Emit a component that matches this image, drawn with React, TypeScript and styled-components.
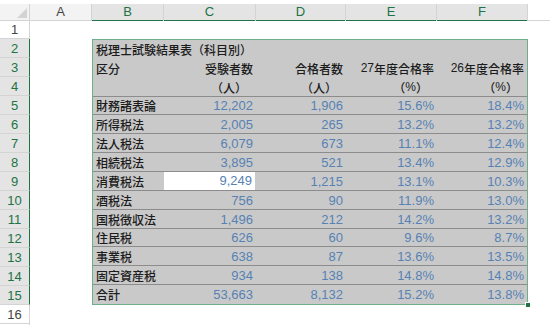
import React from 'react';
import styled, { createGlobalStyle } from 'styled-components';

const GlobalStyle = createGlobalStyle`
  html, body {
    margin: 0;
    padding: 0;
    background: #ffffff;
  }
  body {
    font-family: "Liberation Sans", "Noto Sans CJK JP", sans-serif;
  }
`;

const GREEN = '#217346';
const COLS = '30px 62px 72px 92px 90px 91px 91px 1fr';

const Sheet = styled.div`
  width: 550px;
  height: 325px;
  overflow: hidden;
  display: flex;
  flex-direction: column;
  padding-top: 4px;
  box-sizing: border-box;
`;

const ColumnHeaderBar = styled.div`
  display: grid;
  grid-template-columns: ${COLS};
  height: 16px;
  border-bottom: 1px solid #d4d4d4;
`;

const Corner = styled.div`
  background: #f3f3f3;
  border-right: 1px solid #d4d4d4;
  display: flex;
  align-items: flex-end;
  justify-content: flex-end;
  padding: 0 2px 2px 0;
`;

const ColumnHeader = styled.div<{ $selected?: boolean; $blank?: boolean }>`
  background: ${(p) => (p.$blank ? '#ffffff' : p.$selected ? '#e4e4e4' : '#f3f3f3')};
  color: ${(p) => (p.$selected ? GREEN : '#444444')};
  border-right: ${(p) => (p.$blank ? 'none' : '1px solid #d4d4d4')};
  box-shadow: ${(p) => (p.$selected ? `inset 0 -1px 0 ${GREEN}` : 'none')};
  margin-bottom: ${(p) => (p.$selected ? '-1px' : '0')};
  font-size: 13px;
  line-height: 16px;
  text-align: center;
`;

const SheetRow = styled.div<{ $height: number }>`
  display: flex;
  height: ${(p) => p.$height}px;
  flex-shrink: 0;
`;

const RowHeader = styled.div<{ $selected?: boolean }>`
  width: 30px;
  flex-shrink: 0;
  box-sizing: border-box;
  background: ${(p) => (p.$selected ? '#e4e4e4' : '#ffffff')};
  color: ${(p) => (p.$selected ? GREEN : '#444444')};
  border-right: 1px solid ${(p) => (p.$selected ? GREEN : '#d4d4d4')};
  border-bottom: 1px solid #d4d4d4;
  font-size: 13px;
  display: flex;
  align-items: center;
  justify-content: center;
`;

const Middle = styled.div`
  display: flex;
  height: 266px;
  flex-shrink: 0;
`;

const RowHeaderColumn = styled.div`
  width: 30px;
  display: grid;
  grid-template-rows: repeat(14, 1fr);
`;

const BlankColumn = styled.div`
  width: 62px;
`;

const TableBox = styled.div`
  position: relative;
  width: 436px;
  box-sizing: border-box;
  border: 1px solid #6fae8a;
  background: #c9c9c9;
  display: grid;
  grid-template-rows: repeat(14, 1fr);
`;

const FillHandle = styled.div`
  position: absolute;
  right: -3px;
  bottom: -3px;
  width: 4px;
  height: 4px;
  background: ${GREEN};
  border: 1px solid #ffffff;
  border-width: 1px 0 0 1px;
`;

const TableRow = styled.div<{ $ruled?: boolean }>`
  display: grid;
  grid-template-columns: 71px 92px 90px 91px 90px;
  border-top: ${(p) => (p.$ruled ? '1px solid #8c8c8c' : 'none')};
  margin-top: ${(p) => (p.$ruled ? '-1px' : '0')};
`;

const Cell = styled.div<{ $align?: 'left' | 'right'; $number?: boolean; $active?: boolean }>`
  display: flex;
  align-items: center;
  justify-content: ${(p) => (p.$align === 'right' ? 'flex-end' : 'flex-start')};
  padding: 0 3px;
  white-space: nowrap;
  overflow: visible;
  font-size: ${(p) => (p.$number ? '13px' : '12px')};
  font-weight: ${(p) => (p.$number ? 400 : 500)};
  color: ${(p) => (p.$number ? '#5682b4' : '#1c1c1c')};
  background: ${(p) => (p.$active ? '#ffffff' : 'transparent')};
  margin: ${(p) => (p.$active ? '0 1px 1px 0' : '0')};
`;

const UnitCell = styled(Cell)`
  padding-right: 9px;
`;

const Title = styled(Cell)`
  grid-column: 1 / span 5;
`;

const CJK = styled.span`
  font-family: "Noto Sans CJK JP", sans-serif;
  font-size: 12px;
`;

const rows: string[][] = [
  ['財務諸表論', '12,202', '1,906', '15.6%', '18.4%'],
  ['所得税法', '2,005', '265', '13.2%', '13.2%'],
  ['法人税法', '6,079', '673', '11.1%', '12.4%'],
  ['相続税法', '3,895', '521', '13.4%', '12.9%'],
  ['消費税法', '9,249', '1,215', '13.1%', '10.3%'],
  ['酒税法', '756', '90', '11.9%', '13.0%'],
  ['国税徴収法', '1,496', '212', '14.2%', '13.2%'],
  ['住民税', '626', '60', '9.6%', '8.7%'],
  ['事業税', '638', '87', '13.6%', '13.5%'],
  ['固定資産税', '934', '138', '14.8%', '14.8%'],
  ['合計', '53,663', '8,132', '15.2%', '13.8%'],
];

const letters = ['A', 'B', 'C', 'D', 'E', 'F'];

export default function App() {
  return (
    <>
      <GlobalStyle />
      <Sheet>
        <ColumnHeaderBar>
          <Corner>
            <svg width="10" height="10" viewBox="0 0 10 10">
              <polygon points="10,0 10,10 0,10" fill="#d3d3d3" />
            </svg>
          </Corner>
          {letters.map((l) => (
            <ColumnHeader key={l} $selected={l !== 'A'}>
              {l}
            </ColumnHeader>
          ))}
          <ColumnHeader $blank />
        </ColumnHeaderBar>

        <SheetRow $height={18}>
          <RowHeader>1</RowHeader>
        </SheetRow>

        <Middle>
          <RowHeaderColumn>
            {Array.from({ length: 14 }, (_, i) => (
              <RowHeader key={i} $selected>
                {i + 2}
              </RowHeader>
            ))}
          </RowHeaderColumn>
          <BlankColumn />
          <TableBox>
            <TableRow>
              <Title>税理士試験結果表（科目別）</Title>
            </TableRow>
            <TableRow>
              <Cell>区分</Cell>
              <Cell $align="right">受験者数</Cell>
              <Cell $align="right">合格者数</Cell>
              <Cell $align="right">
                <span>27</span>
                <CJK>年度合格率</CJK>
              </Cell>
              <Cell $align="right">
                <span>26</span>
                <CJK>年度合格率</CJK>
              </Cell>
            </TableRow>
            <TableRow>
              <Cell />
              <UnitCell $align="right">（人）</UnitCell>
              <UnitCell $align="right">（人）</UnitCell>
              <UnitCell $align="right">
                <CJK>（</CJK>
                <span>%</span>
                <CJK>）</CJK>
              </UnitCell>
              <UnitCell $align="right">
                <CJK>（</CJK>
                <span>%</span>
                <CJK>）</CJK>
              </UnitCell>
            </TableRow>
            {rows.map((r, i) => (
              <TableRow key={r[0]} $ruled>
                <Cell>{r[0]}</Cell>
                {r.slice(1).map((v, j) => (
                  <Cell key={j} $align="right" $number $active={i === 4 && j === 0}>
                    {v}
                  </Cell>
                ))}
              </TableRow>
            ))}
            <FillHandle />
          </TableBox>
        </Middle>

        <SheetRow $height={19}>
          <RowHeader>16</RowHeader>
        </SheetRow>
        <SheetRow $height={19}>
          <RowHeader />
        </SheetRow>
      </Sheet>
    </>
  );
}
